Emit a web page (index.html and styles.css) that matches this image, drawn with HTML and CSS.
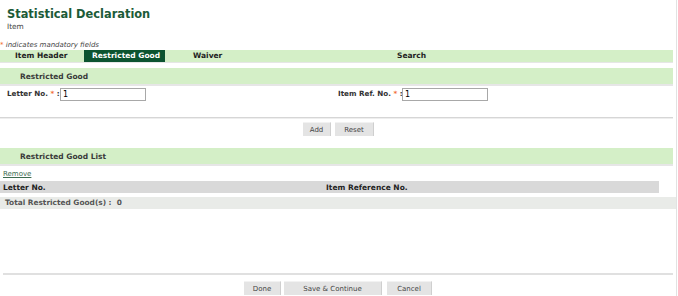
FILE: index.html
```html
<!DOCTYPE html>
<html lang="en">
<head>
	<meta charset="UTF-8">
	<title>Statistical Declaration</title>
	<link rel="stylesheet" href="styles.css">
</head>
<body>
<div class="page">
	<div class="title">
		<h1>Statistical Declaration</h1>
		<div class="sub">Item</div>
	</div>
	<div class="note"><span class="req">*</span> indicates mandatory fields</div>
	<ul class="tabs">
		<li class="t1">Item Header</li>
		<li class="t2 active">Restricted Good</li>
		<li class="t3">Waiver</li>
		<li class="t4">Search</li>
	</ul>
	<div class="section">Restricted Good</div>
	<div class="form-row">
		<div class="field f1">
			<label>Letter No. <span class="req">*</span> :</label>
			<input type="text" value="1">
		</div>
		<div class="field f2">
			<label>Item Ref. No. <span class="req">*</span> :</label>
			<input type="text" value="1">
		</div>
	</div>
	<div class="rule"></div>
	<div class="btns mid">
		<button>Add</button>
		<button>Reset</button>
	</div>
	<div class="section list">Restricted Good List</div>
	<a href="javascript:;" class="remove">Remove</a>
	<table class="grid">
		<tr class="head">
			<th class="c1">Letter No.</th>
			<th>Item Reference No.</th>
		</tr>
	</table>
	<div class="total">Total Restricted Good(s) :&nbsp; 0</div>
	<div class="rule bottom"></div>
	<div class="btns foot">
		<button class="b-done">Done</button>
		<button class="b-save">Save &amp; Continue</button>
		<button class="b-cancel">Cancel</button>
	</div>
</div>
</body>
</html>
```
FILE: styles.css
```css
*{margin: 0px; padding: 0px;}
body{
	font-family: "DejaVu Sans", Verdana, sans-serif;
	font-size: 8px;
	color: #333;
	background: #fff;
}
.page{
	width: 676px;
	height: 296px;
	border-right: 1px solid #e2e2e2;
}
.title{
	padding: 7px 0 0 7px;
	height: 34px;
}
.title h1{
	font-size: 11.4px;
	color: #1c5b38;
	line-height: 15px;
}
.sub{
	font-size: 7.4px;
	color: #444;
	line-height: 10px;
}
.note{
	font-size: 7px;
	font-style: italic;
	color: #444;
	line-height: 9px;
	height: 9px;
}
.req{
	color: #f26a2e;
	font-style: normal;
}
.tabs{
	list-style-type: none;
	display: flex;
	width: 673px;
	height: 12px;
	background-color: #d4efc7;
	border-bottom: 1px solid #e6e6e6;
	font-weight: bold;
	font-size: 7.5px;
	line-height: 12px;
	color: #222;
	white-space: nowrap;
}
.tabs li{
	padding-left: 15px;
}
.tabs .t1{width: 69px;}
.tabs .t2{width: 73px; padding-left: 8px;}
.tabs .t3{width: 176px; padding-left: 28px;}
.tabs .t4{padding-left: 28px;}
.tabs .active{
	background-color: #0c5430;
	color: #fff;
}
.section{
	margin-top: 5px;
	width: 653px;
	height: 16px;
	padding-left: 20px;
	background-color: #d4efc7;
	border-bottom: 2px solid #e6e6e6;
	font-weight: bold;
	font-size: 7.5px;
	line-height: 17px;
	color: #3a3a3a;
}
.form-row{
	display: flex;
	height: 13px;
	margin-top: 1px;
	font-weight: bold;
	font-size: 7.2px;
	line-height: 13px;
}
.field{
	display: flex;
}
.f1{width: 331px; padding-left: 7px;}
.field label{white-space: nowrap;}
.f1 label{width: 53px;}
.f2 label{width: 64px;}
.field input{
	width: 82px;
	height: 11px;
	border: 1px solid #a8a8a8;
	font-family: inherit;
	font-size: 8px;
	padding-left: 2px;
	margin-top: 1px;
}
.rule{
	margin-top: 17px;
	width: 673px;
	height: 1px;
	background-color: #d6d6d6;
	border-bottom: 1px solid #eee;
}
.btns{
	display: flex;
	justify-content: center;
	gap: 4px;
}
.mid{
	margin-top: 3px;
	margin-left: 1px;
}
.btns button{
	height: 14px;
	background-color: #e4e4e4;
	border: none;
	border-top: 1px solid #f2f2f2;
	border-right: 1px solid #cfcfcf;
	font-family: inherit;
	font-size: 7px;
	color: #444;
	padding: 0 9px;
}
.mid button{width: 28px; padding: 0;}
.mid button + button{width: 39px;}
.list{
	margin-top: 12px;
}
.remove{
	display: block;
	margin: 3px 0 0 3px;
	height: 11px;
	color: #3d6b4f;
	font-size: 7px;
	line-height: 11px;
}
.grid{
	width: 659px;
	border-collapse: collapse;
	margin-top: 1px;
}
.grid th{
	background-color: #d9d9d9;
	height: 12px;
	text-align: left;
	font-size: 7.5px;
	color: #222;
	padding-left: 3px;
}
.grid .c1{width: 320px;}
.total{
	margin-top: 4px;
	width: 671px;
	height: 12px;
	padding-left: 5px;
	background-color: #e9ebe8;
	font-weight: bold;
	font-size: 7.4px;
	line-height: 12px;
	color: #555;
}
.bottom{
	margin-top: 64px;
	margin-left: 3px;
	width: 670px;
	border-bottom: none;
	height: 2px;
	background-color: #e0e0e0;
}
.foot{
	margin-top: 6px;
	gap: 3px;
}
.foot .b-done{width: 37px; padding: 0;}
.foot .b-save{width: 98px; padding: 0;}
.foot .b-cancel{width: 45px; padding: 0; margin-left: 2px;}
```
